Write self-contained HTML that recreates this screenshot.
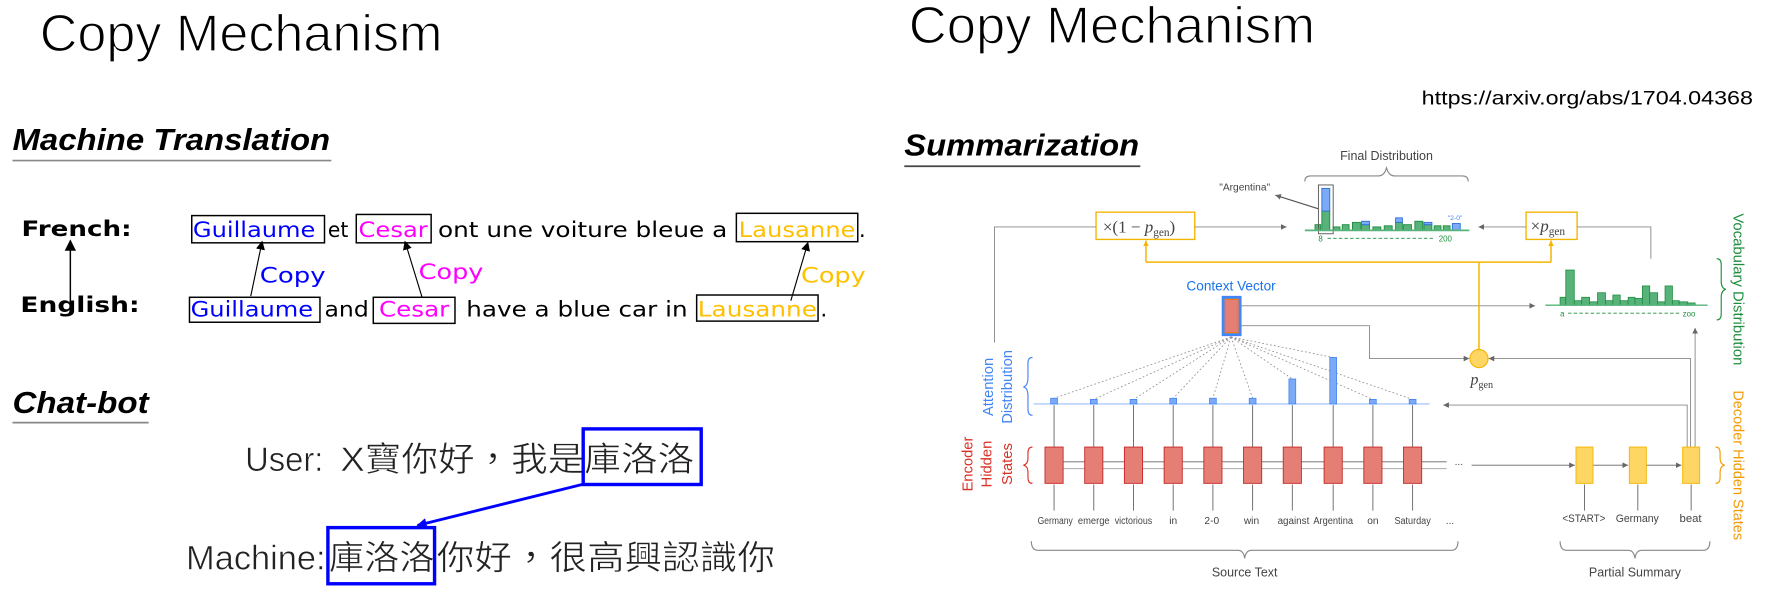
<!DOCTYPE html>
<html><head><meta charset="utf-8"><style>
html,body{margin:0;padding:0;background:#fff;}
svg{display:block;}
</style></head><body>
<svg width="1770" height="594" viewBox="0 0 1560 523.5" xmlns="http://www.w3.org/2000/svg">
<defs>
<marker id="ab" markerWidth="8" markerHeight="8" refX="7" refY="4" orient="auto" markerUnits="userSpaceOnUse"><path d="M0,0 L8,4 L0,8 z" fill="#000"/></marker>
<marker id="ab2" markerWidth="10" markerHeight="10" refX="9" refY="5" orient="auto" markerUnits="userSpaceOnUse"><path d="M0,0 L10,5 L0,10 z" fill="#000"/></marker>
<marker id="ag" markerWidth="5" markerHeight="5" refX="5" refY="2.5" orient="auto" markerUnits="userSpaceOnUse"><path d="M0,0 L5,2.5 L0,5 z" fill="#666"/></marker>
<marker id="ao" markerWidth="5" markerHeight="5" refX="5" refY="2.5" orient="auto" markerUnits="userSpaceOnUse"><path d="M0,0 L5,2.5 L0,5 z" fill="#f4b400"/></marker>
<marker id="abl" markerWidth="9" markerHeight="9" refX="8" refY="4.5" orient="auto" markerUnits="userSpaceOnUse"><path d="M0,0 L9,4.5 L0,9 z" fill="#0000ff"/></marker>
</defs>

<!-- LEFT -->
<text x="35" y="45" font-family="Liberation Sans, sans-serif" font-size="46" textLength="355" lengthAdjust="spacingAndGlyphs" fill="#000" stroke="#fff" stroke-width="1.1">Copy Mechanism</text>
<text x="11" y="132" font-family="Liberation Sans, sans-serif" font-weight="bold" font-style="italic" font-size="27" textLength="280" lengthAdjust="spacingAndGlyphs">Machine Translation</text>
<line x1="11" y1="141.5" x2="292" y2="141.5" stroke="#888" stroke-width="1.5"/>

<g font-family="DejaVu Sans, sans-serif" font-size="19">
<text x="19" y="208" font-weight="bold" textLength="97" lengthAdjust="spacingAndGlyphs">French:</text>
<text x="18" y="275" font-weight="bold" textLength="105" lengthAdjust="spacingAndGlyphs">English:</text>
<line x1="62" y1="278" x2="62" y2="212" stroke="#000" stroke-width="1.3" marker-end="url(#ab2)"/>

<rect x="169" y="190" width="117" height="24" fill="none" stroke="#000" stroke-width="1.3"/>
<text x="170" y="209" fill="#0000ff" textLength="108" lengthAdjust="spacingAndGlyphs">Guillaume</text>
<text x="289" y="209" textLength="18" lengthAdjust="spacingAndGlyphs">et</text>
<rect x="314" y="189" width="66" height="25" fill="none" stroke="#000" stroke-width="1.3"/>
<text x="316" y="209" fill="#ff00ff" textLength="61" lengthAdjust="spacingAndGlyphs">Cesar</text>
<text x="386" y="209" textLength="255" lengthAdjust="spacingAndGlyphs">ont une voiture bleue a</text>
<rect x="649" y="188" width="107" height="25" fill="none" stroke="#000" stroke-width="1.3"/>
<text x="651" y="209" fill="#ffc000" textLength="103" lengthAdjust="spacingAndGlyphs">Lausanne</text>
<text x="757" y="209">.</text>

<rect x="167" y="262" width="115" height="22" fill="none" stroke="#000" stroke-width="1.3"/>
<text x="168" y="279" fill="#0000ff" textLength="108" lengthAdjust="spacingAndGlyphs">Guillaume</text>
<text x="286" y="279" textLength="39" lengthAdjust="spacingAndGlyphs">and</text>
<rect x="329" y="262" width="72" height="23" fill="none" stroke="#000" stroke-width="1.3"/>
<text x="334" y="279" fill="#ff00ff" textLength="62" lengthAdjust="spacingAndGlyphs">Cesar</text>
<text x="411" y="279" textLength="195" lengthAdjust="spacingAndGlyphs">have a blue car in</text>
<rect x="614" y="260" width="107" height="23" fill="none" stroke="#000" stroke-width="1.3"/>
<text x="615" y="279" fill="#ffc000" textLength="105" lengthAdjust="spacingAndGlyphs">Lausanne</text>
<text x="723" y="279">.</text>

<text x="229" y="249" fill="#0000ff" textLength="58" lengthAdjust="spacingAndGlyphs">Copy</text>
<text x="369" y="246" fill="#ff00ff" textLength="57" lengthAdjust="spacingAndGlyphs">Copy</text>
<text x="706" y="249" fill="#ffc000" textLength="57" lengthAdjust="spacingAndGlyphs">Copy</text>
</g>
<line x1="221" y1="261" x2="231" y2="213" stroke="#000" stroke-width="1" marker-end="url(#ab)"/>
<line x1="372" y1="262" x2="357" y2="213" stroke="#000" stroke-width="1" marker-end="url(#ab)"/>
<line x1="697" y1="265" x2="712" y2="214" stroke="#000" stroke-width="1" marker-end="url(#ab)"/>

<text x="11" y="364" font-family="Liberation Sans, sans-serif" font-weight="bold" font-style="italic" font-size="27" textLength="120" lengthAdjust="spacingAndGlyphs">Chat-bot</text>
<line x1="11" y1="372.5" x2="131" y2="372.5" stroke="#888" stroke-width="1.5"/>

<g font-family="Liberation Sans, 'Noto Sans CJK TC', sans-serif" font-size="30" fill="#222" stroke="#fff" stroke-width="0.5">
<text x="216" y="415" textLength="69" lengthAdjust="spacingAndGlyphs">User:</text>
<text x="300" y="415" textLength="215" lengthAdjust="spacingAndGlyphs">X寶你好，我是</text>
<text x="515" y="415" textLength="97" lengthAdjust="spacingAndGlyphs">庫洛洛</text>
<text x="164" y="502" textLength="123" lengthAdjust="spacingAndGlyphs">Machine:</text>
<text x="290" y="502" textLength="93" lengthAdjust="spacingAndGlyphs">庫洛洛</text>
<text x="385" y="502" textLength="298" lengthAdjust="spacingAndGlyphs">你好，很高興認識你</text>
</g>
<rect x="514" y="378" width="104" height="49" fill="none" stroke="#0000ff" stroke-width="3"/>
<rect x="289" y="465" width="94" height="49.5" fill="none" stroke="#0000ff" stroke-width="3"/>
<line x1="513" y1="427" x2="368" y2="463" stroke="#0000ff" stroke-width="2.5" marker-end="url(#abl)"/>

<!-- RIGHT -->
<text x="801" y="38" font-family="Liberation Sans, sans-serif" font-size="46" textLength="358" lengthAdjust="spacingAndGlyphs" stroke="#fff" stroke-width="1.1">Copy Mechanism</text>
<text x="1253" y="92" font-family="Liberation Sans, sans-serif" font-size="17" textLength="292" lengthAdjust="spacingAndGlyphs">https://arxiv.org/abs/1704.04368</text>
<text x="797" y="137" font-family="Liberation Sans, sans-serif" font-weight="bold" font-style="italic" font-size="27" textLength="207" lengthAdjust="spacingAndGlyphs">Summarization</text>
<line x1="797" y1="146.5" x2="1005" y2="146.5" stroke="#444" stroke-width="1.5"/>

<g font-family="Liberation Sans, sans-serif">
<text x="1222" y="141" font-size="11" fill="#444" text-anchor="middle">Final Distribution</text>
<path d="M1150,160 q0,-5 5,-5 h60 q5,0 7,-7 q2,7 7,7 h60 q5,0 5,5" fill="none" stroke="#888" stroke-width="1"/>
<text x="1097" y="168" font-size="9" fill="#444" text-anchor="middle">"Argentina"</text>
<line x1="1162" y1="184" x2="1124" y2="172" stroke="#555" stroke-width="1" marker-end="url(#ag)"/>

<g stroke="#1e8e3e" stroke-width="0.8" fill="#57b37a">
<rect x="1159" y="198" width="5" height="5"/>
<rect x="1165" y="186" width="7" height="17"/>
<rect x="1175" y="200" width="6" height="3"/>
<rect x="1183" y="198" width="6" height="5"/>
<rect x="1192" y="196" width="7" height="7"/>
<rect x="1200" y="198" width="7" height="5"/>
<rect x="1210" y="200" width="7" height="3"/>
<rect x="1220" y="199" width="7" height="4"/>
<rect x="1230" y="196" width="6" height="7"/>
<rect x="1237" y="198" width="7" height="5"/>
<rect x="1247" y="195" width="7" height="8"/>
<rect x="1255" y="198" width="7" height="5"/>
<rect x="1264" y="199" width="6" height="4"/>
<rect x="1272" y="199" width="6" height="4"/>
</g>
<g stroke="#2f6fd8" stroke-width="0.8" fill="#7baaf7">
<rect x="1165" y="166" width="7" height="20"/>
<rect x="1200" y="195" width="7" height="3"/>
<rect x="1230" y="192" width="6" height="4"/>
<rect x="1255" y="196" width="7" height="2"/>
<rect x="1280" y="197" width="7" height="6"/>
</g>
<rect x="1162" y="163" width="13" height="43" fill="none" stroke="#555" stroke-width="0.8"/>
<line x1="1150" y1="203" x2="1295" y2="203" stroke="#57b37a" stroke-width="1.5"/>
<text x="1162" y="213" font-size="7" fill="#1e8e3e">8</text>
<line x1="1170" y1="210" x2="1265" y2="210" stroke="#1e8e3e" stroke-width="0.8" stroke-dasharray="3,2"/>
<text x="1268" y="213" font-size="7" fill="#1e8e3e">200</text>
<text x="1276" y="194" font-size="6" fill="#4285f4">"2-0"</text>

<rect x="966" y="187" width="87" height="24" fill="#fff" stroke="#f4b400" stroke-width="1.2"/>
<text x="972" y="205" font-family="Liberation Serif, serif" font-size="15" fill="#444">×(1 − <tspan font-style="italic">p</tspan><tspan font-size="10" dy="3">gen</tspan><tspan dy="-3">)</tspan></text>
<rect x="1345" y="187" width="45" height="24" fill="#fff" stroke="#f4b400" stroke-width="1.2"/>
<text x="1349" y="204" font-family="Liberation Serif, serif" font-size="15" fill="#444">×<tspan font-style="italic">p</tspan><tspan font-size="10" dy="3">gen</tspan></text>

<g stroke="#888" stroke-width="0.8" fill="none">
<line x1="1053" y1="200" x2="1134" y2="200" marker-end="url(#ag)"/>
<line x1="1345" y1="200" x2="1303" y2="200" marker-end="url(#ag)"/>
<polyline points="876.5,302 876.5,200 966,200"/>
<polyline points="1390,200 1455,200 1455,228"/>
<line x1="1093" y1="269.5" x2="1353" y2="269.5" marker-end="url(#ag)"/>
<polyline points="1093,287 1207,287 1207,316 1295,316" marker-end="url(#ag)"/>
<polyline points="1490,394 1490,316 1312,316" marker-end="url(#ag)"/>
<line x1="1494" y1="394" x2="1494" y2="289" marker-end="url(#ag)"/>
<polyline points="1487,394 1487,357 1272,357" marker-end="url(#ag)"/>
</g>
<g stroke="#f4b400" stroke-width="1.3" fill="none">
<line x1="1010" y1="231" x2="1367" y2="231"/>
<line x1="1010" y1="231" x2="1010" y2="212" marker-end="url(#ao)"/>
<line x1="1367" y1="231" x2="1367" y2="212" marker-end="url(#ao)"/>
<line x1="1303.5" y1="231" x2="1303.5" y2="308"/>
</g>
<circle cx="1303.5" cy="316" r="8" fill="#fdd663" stroke="#f4b400" stroke-width="1"/>
<text x="1296" y="339" font-family="Liberation Serif, serif" font-size="14" font-style="italic" fill="#444">p<tspan font-size="9" dy="3" font-style="normal">gen</tspan></text>

<text x="1085" y="256" font-size="12" fill="#1a73e8" text-anchor="middle">Context Vector</text>
<rect x="1078" y="262" width="15" height="33" fill="#e57f75" stroke="#4285f4" stroke-width="2.5"/>
<rect x="1080" y="264" width="11" height="29" fill="none" stroke="#f57c00" stroke-width="0.8"/>

<g stroke="#1e8e3e" stroke-width="0.7" fill="#57b37a">
<rect x="1375" y="262" width="5" height="7"/>
<rect x="1380" y="238" width="7.5" height="31"/>
<rect x="1387.5" y="265" width="6.5" height="4"/>
<rect x="1394" y="262" width="7" height="7"/>
<rect x="1401" y="266" width="7" height="3"/>
<rect x="1408" y="258" width="7" height="11"/>
<rect x="1415" y="265" width="6.5" height="4"/>
<rect x="1421.5" y="260" width="6.5" height="9"/>
<rect x="1428" y="265" width="7" height="4"/>
<rect x="1435" y="262" width="6" height="7"/>
<rect x="1441" y="263" width="6.5" height="6"/>
<rect x="1447.5" y="252" width="6.5" height="17"/>
<rect x="1454" y="258" width="7" height="11"/>
<rect x="1461" y="266" width="6.5" height="3"/>
<rect x="1467.5" y="252" width="6.5" height="17"/>
<rect x="1474" y="265" width="6" height="4"/>
<rect x="1480" y="266" width="7.5" height="3"/>
<rect x="1487.5" y="267" width="6.5" height="2"/>
</g>
<line x1="1362" y1="269" x2="1505" y2="269" stroke="#57b37a" stroke-width="1.2"/>
<text x="1375" y="279" font-size="7" fill="#1e8e3e">a</text>
<line x1="1382" y1="276" x2="1480" y2="276" stroke="#1e8e3e" stroke-width="0.8" stroke-dasharray="3,2"/>
<text x="1483" y="279" font-size="7" fill="#1e8e3e">zoo</text>
<path d="M1513,228 q4,0 4,5 v15 q0,6 4,7 q-4,1 -4,7 v15 q0,5 -4,5" fill="none" stroke="#1e8e3e" stroke-width="1"/>
<text transform="translate(1528,255) rotate(90)" font-size="13" fill="#1e8e3e" text-anchor="middle" textLength="134" lengthAdjust="spacingAndGlyphs">Vocabulary Distribution</text>
<text transform="translate(1528,410) rotate(90)" font-size="13" fill="#f29900" text-anchor="middle" textLength="132" lengthAdjust="spacingAndGlyphs">Decoder Hidden States</text>
<path d="M1512,394 q4,0 4,5 v5 q0,5 4,6 q-4,1 -4,6 v5 q0,5 -4,5" fill="none" stroke="#f29900" stroke-width="1"/>

<line x1="911" y1="356" x2="1260" y2="356" stroke="#aecbfa" stroke-width="1.2"/>
<g stroke="#888" stroke-width="0.7" stroke-dasharray="1.5,2" fill="none">
<line x1="1085" y1="297" x2="929" y2="351"/>
<line x1="1085" y1="297" x2="964" y2="352"/>
<line x1="1085" y1="297" x2="999" y2="352"/>
<line x1="1085" y1="297" x2="1034" y2="351"/>
<line x1="1085" y1="297" x2="1069" y2="351"/>
<line x1="1085" y1="297" x2="1104" y2="351"/>
<line x1="1085" y1="297" x2="1139" y2="334"/>
<line x1="1085" y1="297" x2="1175" y2="315"/>
<line x1="1085" y1="297" x2="1210" y2="352"/>
<line x1="1085" y1="297" x2="1245" y2="352"/>
</g>
<g fill="#7baaf7" stroke="#4285f4" stroke-width="0.7">
<rect x="926" y="351" width="6" height="5"/>
<rect x="961" y="352" width="6" height="4"/>
<rect x="996" y="352" width="6" height="4"/>
<rect x="1031" y="351" width="6" height="5"/>
<rect x="1066" y="351" width="6" height="5"/>
<rect x="1101" y="351" width="6" height="5"/>
<rect x="1136" y="334" width="6" height="22"/>
<rect x="1172" y="315" width="6" height="41"/>
<rect x="1207" y="352" width="6" height="4"/>
<rect x="1242" y="352" width="6" height="4"/>
</g>
<text transform="translate(875,341) rotate(-90)" font-size="13" fill="#4285f4" text-anchor="middle">Attention</text>
<text transform="translate(892,341) rotate(-90)" font-size="13" fill="#4285f4" text-anchor="middle">Distribution</text>
<path d="M910,315 q-4,0 -4,5 v13 q0,7 -4,8 q4,1 4,8 v12 q0,5 4,5" fill="none" stroke="#4285f4" stroke-width="1"/>
<text transform="translate(857,409) rotate(-90)" font-size="13" fill="#d93025" text-anchor="middle">Encoder</text>
<text transform="translate(874,409) rotate(-90)" font-size="13" fill="#d93025" text-anchor="middle">Hidden</text>
<text transform="translate(892,409) rotate(-90)" font-size="13" fill="#d93025" text-anchor="middle">States</text>
<path d="M910,394 q-4,0 -4,5 v5 q0,5 -4,6 q4,1 4,6 v5 q0,5 4,5" fill="none" stroke="#d93025" stroke-width="1"/>

<g stroke="#666" stroke-width="0.8" fill="none">
<path d="M929,450V427M929,394V357M964,450V427M964,394V357M999,450V427M999,394V357M1034,450V427M1034,394V357M1069,450V427M1069,394V357M1104,450V427M1104,394V357M1139,450V427M1139,394V357M1175,450V427M1175,394V357M1210,450V427M1210,394V357M1245,450V427M1245,394V357"/>
<path d="M937,407H956M972,407H991M1007,407H1026M1042,407H1061M1077,407H1096M1112,407H1131M1147,407H1167M1183,407H1202M1218,407H1237M1253,407H1275"/>
<path d="M956,413H937M991,413H972M1026,413H1007M1061,413H1042M1096,413H1077M1131,413H1112M1167,413H1147M1202,413H1183M1237,413H1218M1275,413H1253" stroke="#aaa"/>
<line x1="1297" y1="410" x2="1388" y2="410" marker-end="url(#ag)"/>
<line x1="1404" y1="410" x2="1435" y2="410" marker-end="url(#ag)"/>
<line x1="1451" y1="410" x2="1482" y2="410" marker-end="url(#ag)"/>
<path d="M1396.5,450V427M1443.5,450V427M1490.5,450V427"/>
</g>
<g fill="#e57f75" stroke="#c62828" stroke-width="0.8">
<rect x="921" y="394" width="16" height="32"/><rect x="956" y="394" width="16" height="32"/>
<rect x="991" y="394" width="16" height="32"/><rect x="1026" y="394" width="16" height="32"/>
<rect x="1061" y="394" width="16" height="32"/><rect x="1096" y="394" width="16" height="32"/>
<rect x="1131" y="394" width="16" height="32"/><rect x="1167" y="394" width="16" height="32"/>
<rect x="1202" y="394" width="16" height="32"/><rect x="1237" y="394" width="16" height="32"/>
</g>
<text x="1282" y="410" font-size="9" fill="#444">...</text>
<g fill="#fdd663" stroke="#f4b400" stroke-width="0.8">
<rect x="1389" y="394" width="15" height="32"/><rect x="1436" y="394" width="15" height="32"/><rect x="1483" y="394" width="15" height="32"/>
</g>

<g font-size="9" fill="#444" text-anchor="middle" lengthAdjust="spacingAndGlyphs">
<text x="930" y="462" textLength="31" lengthAdjust="spacingAndGlyphs">Germany</text><text x="964" y="462" textLength="28" lengthAdjust="spacingAndGlyphs">emerge</text><text x="999" y="462" textLength="33" lengthAdjust="spacingAndGlyphs">victorious</text>
<text x="1034" y="462">in</text><text x="1068" y="462">2-0</text><text x="1103" y="462">win</text>
<text x="1140" y="462" textLength="28" lengthAdjust="spacingAndGlyphs">against</text><text x="1175" y="462" textLength="35" lengthAdjust="spacingAndGlyphs">Argentina</text><text x="1210" y="462">on</text>
<text x="1245" y="462" textLength="32" lengthAdjust="spacingAndGlyphs">Saturday</text><text x="1278" y="462">...</text>
<text x="1396" y="460" font-size="10" textLength="38" lengthAdjust="spacingAndGlyphs">&lt;START&gt;</text><text x="1443" y="460" font-size="10" textLength="38" lengthAdjust="spacingAndGlyphs">Germany</text><text x="1490" y="460" font-size="10">beat</text>
</g>
<path d="M909,477 q0,8 6,8 h176 q5,0 6,7 q1,-7 6,-7 h176 q6,0 6,-8" fill="none" stroke="#888" stroke-width="1"/>
<text x="1097" y="508" font-size="11" fill="#444" text-anchor="middle">Source Text</text>
<path d="M1375,477 q0,8 6,8 h54 q5,0 6,7 q1,-7 6,-7 h54 q6,0 6,-8" fill="none" stroke="#888" stroke-width="1"/>
<text x="1441" y="508" font-size="11" fill="#444" text-anchor="middle">Partial Summary</text>
</g>
</svg>
</body></html>
